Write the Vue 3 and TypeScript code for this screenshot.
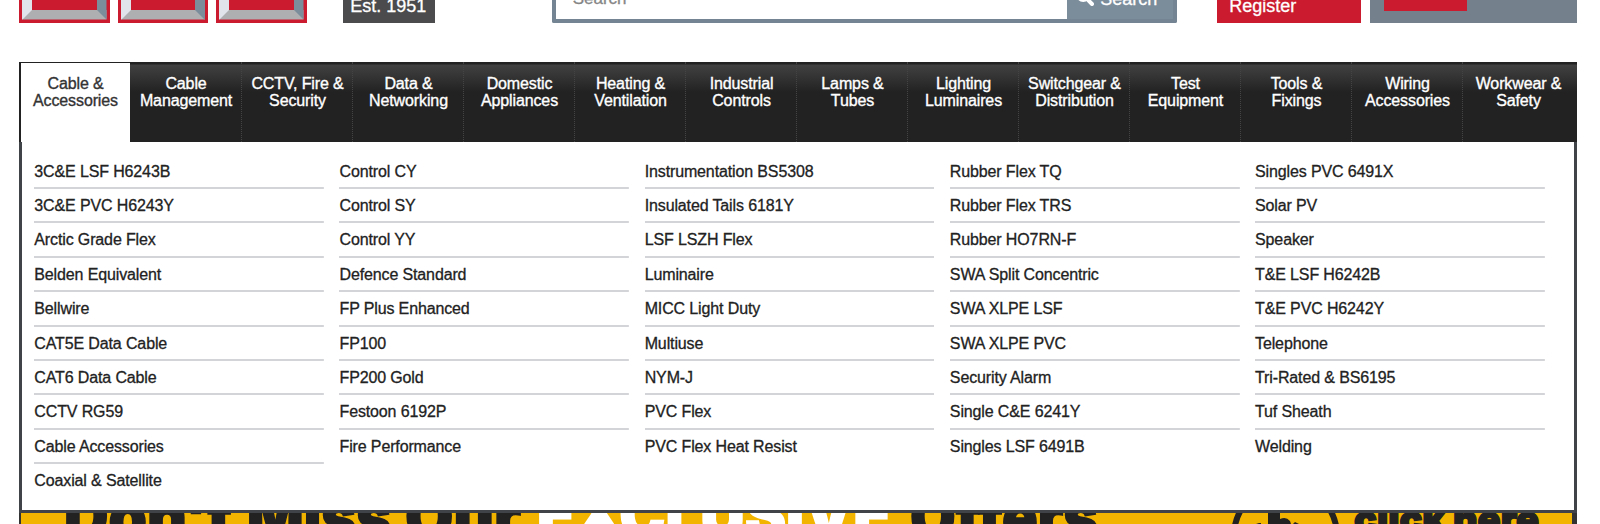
<script setup lang="ts">
interface Word { text: string; x: number; width: number; tone: string }
const tabs: string[][] = [
  ['Cable &', 'Accessories'], ['Cable', 'Management'], ['CCTV, Fire &', 'Security'], ['Data &', 'Networking'],
  ['Domestic', 'Appliances'], ['Heating &', 'Ventilation'], ['Industrial', 'Controls'], ['Lamps &', 'Tubes'],
  ['Lighting', 'Luminaires'], ['Switchgear &', 'Distribution'], ['Test', 'Equipment'], ['Tools &', 'Fixings'],
  ['Wiring', 'Accessories'], ['Workwear &', 'Safety'],
]
const columns: string[][] = [
  ['3C&E LSF H6243B', '3C&E PVC H6243Y', 'Arctic Grade Flex', 'Belden Equivalent', 'Bellwire', 'CAT5E Data Cable', 'CAT6 Data Cable', 'CCTV RG59', 'Cable Accessories', 'Coaxial & Satellite'],
  ['Control CY', 'Control SY', 'Control YY', 'Defence Standard', 'FP Plus Enhanced', 'FP100', 'FP200 Gold', 'Festoon 6192P', 'Fire Performance'],
  ['Instrumentation BS5308', 'Insulated Tails 6181Y', 'LSF LSZH Flex', 'Luminaire', 'MICC Light Duty', 'Multiuse', 'NYM-J', 'PVC Flex', 'PVC Flex Heat Resist'],
  ['Rubber Flex TQ', 'Rubber Flex TRS', 'Rubber HO7RN-F', 'SWA Split Concentric', 'SWA XLPE LSF', 'SWA XLPE PVC', 'Security Alarm', 'Single C&E 6241Y', 'Singles LSF 6491B'],
  ['Singles PVC 6491X', 'Solar PV', 'Speaker', 'T&E LSF H6242B', 'T&E PVC H6242Y', 'Telephone', 'Tri-Rated & BS6195', 'Tuf Sheath', 'Welding'],
]
const words: Word[] = [
  { text: 'Don\'t', x: 43, width: 168, tone: 'dark' },
  { text: 'Miss', x: 226, width: 144, tone: 'dark' },
  { text: 'Our', x: 384, width: 116, tone: 'dark' },
  { text: 'EXCLUSIVE', x: 516, width: 354, tone: 'light' },
  { text: 'Offers', x: 889, width: 188, tone: 'dark' },
]
</script>

<template>
  <div class="page">
    <header class="top">
      <div class="logo"><span v-for="n in 3" :key="n" class="tile"></span></div>
      <div class="est">Est. 1951</div>
      <div class="search">
        <div class="field">Search</div>
        <div class="go">
          <svg width="18" height="18" viewBox="0 0 18 18"><circle cx="7.2" cy="7.2" r="5.4" fill="none" stroke="#fff" stroke-width="3" /><path d="M11.2 11.2L16 16" stroke="#fff" stroke-width="4" stroke-linecap="round" /></svg>
          <span>Search</span>
        </div>
      </div>
      <div class="register">Register</div>
      <div class="basket"><span class="basket-btn"></span></div>
    </header>
    <nav class="nav">
      <div v-for="(t, i) in tabs" :key="i" class="tab" :class="{ active: i === 0 }">
        <span>{{ t[0] }}</span><span>{{ t[1] }}</span>
      </div>
    </nav>
    <section class="menu">
      <ul v-for="(c, i) in columns" :key="i">
        <li v-for="item in c" :key="item">{{ item }}</li>
      </ul>
    </section>
    <div class="banner">
      <svg width="1553" height="11" viewBox="0 0 1553 11">
        <text v-for="w in words" :key="w.text" :x="w.x" :y="w.tone === 'light' ? 24 : 26" :textLength="w.width" lengthAdjust="spacingAndGlyphs" :class="w.tone">{{ w.text }}</text>
        <circle cx="1264.5" cy="23" r="51.5" class="ring" />
        <path d="M1247 0h12v6q6-3 10 2l1 3h-23zM1235 11l3-1h2v1zM1272 11l2-2 4 2z" fill="#222" />
        <text x="1333" y="19" textLength="185" lengthAdjust="spacingAndGlyphs" class="cta">click here</text>
      </svg>
    </div>
  </div>
</template>

<style scoped>
* { box-sizing: border-box; }
.page { width: 1600px; height: 524px; overflow: hidden; background: #fff; font: 16px "Liberation Sans", Arial, sans-serif; color: #222; display: flex; flex-direction: column; padding: 0 23px 0 19px; }
.top { height: 62px; flex: none; display: flex; align-items: flex-start; -webkit-text-stroke: .3px; }
.logo { display: flex; gap: 8px; width: 324px; }
.tile { width: 90.5px; height: 22.5px; border: 2px solid #cb1b2f; border-top: 0; position: relative; background: #cb1b2f; }
.tile::before { content: ""; position: absolute; inset: -67px 1px 1px; border: 10px solid; border-color: #aaa #7b8c9b #adafb1 #e1e5eb; background: #cb1b2f; clip-path: inset(67px 0 0); }
.est { width: 92px; height: 23px; background: #4b4b4d; color: #fff; font-size: 18px; line-height: 12px; padding-left: 7.5px; }
.search { margin-left: 117px; width: 626px; height: 23px; border: 4px solid #748492; border-top: 0; border-radius: 0 0 2px 2px; display: flex; }
.field { flex: 1; padding-left: 17px; color: #858585; font-size: 17px; line-height: 0; margin-top: -1px; }
.go { width: 106px; background: #7b8c9b; color: #fff; font-size: 18px; display: flex; gap: 6px; padding-left: 9px; line-height: 0; }
.go span { margin-top: -1px; }
.go svg { margin-top: -12px; flex: none; }
.register { margin-left: 40px; width: 144px; height: 23px; background: #cb1b2f; color: #fff; font-size: 18px; line-height: 12px; padding-left: 12px; }
.basket { margin-left: 9px; width: 207px; height: 23px; background: #74818d; padding-left: 14px; }
.basket-btn { display: block; width: 83px; height: 11px; background: #cb1b2f; }
.nav { height: 80px; flex: none; display: grid; grid-template-columns: 111px 112px repeat(12, 111px); background: linear-gradient(#222 0 2px, #414141 3px, #222 30px); letter-spacing: -.12px; }
.tab { display: flex; flex-direction: column; align-items: center; padding: 13px 0 0 1px; line-height: 17px; color: #fff; white-space: nowrap; border-right: 1px dotted #444; -webkit-text-stroke: .35px; }
.tab:last-child { border-right-color: transparent; }
.tab.active { background: #fff; color: #333; border: solid #222; border-width: 1px 0 0 2px; padding: 12px 0 0; }
.menu { height: 371px; flex: none; border: 3px solid #404347; border-top: 0; padding: 12px 0 0 12px; display: grid; grid-template-columns: repeat(5, 290px); column-gap: 15.2px; align-items: start; letter-spacing: -.13px; }
ul { list-style: none; margin: 0; padding: .6px 0 0 .3px; }
li { height: 34.4px; line-height: 34px; white-space: nowrap; -webkit-text-stroke: .3px; background: linear-gradient(#d2d4d7, #d2d4d7) bottom / 100% 2px no-repeat; }
li:last-child { background: none; }
.banner { height: 11px; flex: none; border: solid #333; border-width: 0 5px 0 2px; background: #f3b400; overflow: hidden; }
.banner svg { display: block; }
text { font: 900 63px Inter, "Liberation Sans", sans-serif; fill: #222; stroke: #222; stroke-width: 1.5px; }
.light { fill: #fff; stroke: #fff; }
.ring { fill: none; stroke: #222; stroke-width: 6px; }
.cta { font-size: 37px; }
</style>
